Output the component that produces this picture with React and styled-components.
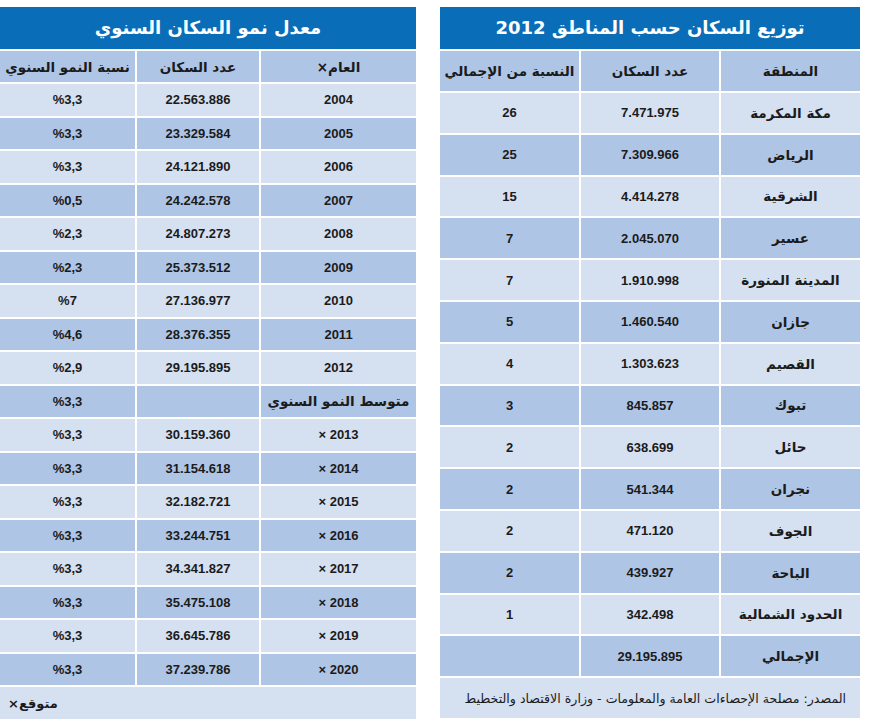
import React from "react";
import styled, { createGlobalStyle } from "styled-components";

const Global = createGlobalStyle`
  html, body { margin: 0; padding: 0; background: #ffffff; }
  body { font-family: "Liberation Sans", "DejaVu Sans", sans-serif; }
`;

const Page = styled.div`
  display: flex;
  flex-direction: row-reverse;
  justify-content: flex-end;
  gap: 24px;
  padding: 7px 10px 0 0;
  width: 870px;
  box-sizing: border-box;
`;

const Panel = styled.div`
  direction: rtl;
  width: ${(p) => p.$w}px;
  display: flex;
  flex-direction: column;
  gap: 2px;
`;

const Title = styled.div`
  height: 42px;
  background: #0a6db7;
  color: #ffffff;
  display: flex;
  align-items: center;
  justify-content: center;
  font-family: "DejaVu Sans", sans-serif;
  font-weight: 700;
  font-size: 18px;
  padding-bottom: 2px;
  box-sizing: border-box;
`;

const Row = styled.div`
  display: grid;
  grid-template-columns: ${(p) => p.$cols};
  column-gap: 2px;
  height: ${(p) => p.$h}px;
`;

const Cell = styled.div`
  background: ${(p) => (p.$dark ? "#aec5e6" : "#d5e0f1")};
  display: flex;
  align-items: center;
  justify-content: center;
  color: #1b1b1b;
  font-size: ${(p) => (p.$ar ? "13.5px" : "13px")};
  font-weight: 700;
  font-family: ${(p) =>
    p.$ar ? '"DejaVu Sans", sans-serif' : '"Liberation Sans", "DejaVu Sans", sans-serif'};
  white-space: nowrap;
  overflow: hidden;
`;

const Footer = styled.div`
  height: ${(p) => p.$h}px;
  background: #d5e0f1;
  display: flex;
  align-items: center;
  justify-content: ${(p) => (p.$end ? "flex-end" : "flex-start")};
  padding: 0 ${(p) => p.$pad}px;
  font-family: "DejaVu Sans", sans-serif;
  font-size: ${(p) => p.$fs}px;
  font-weight: ${(p) => p.$fw};
  color: #1b1b1b;
  white-space: nowrap;
  overflow: hidden;
`;

const growth = [
  ["2004", "22.563.886", "%3,3"],
  ["2005", "23.329.584", "%3,3"],
  ["2006", "24.121.890", "%3,3"],
  ["2007", "24.242.578", "%0,5"],
  ["2008", "24.807.273", "%2,3"],
  ["2009", "25.373.512", "%2,3"],
  ["2010", "27.136.977", "%7"],
  ["2011", "28.376.355", "%4,6"],
  ["2012", "29.195.895", "%2,9"],
  ["AVG", "", "%3,3"],
  ["2013 ×", "30.159.360", "%3,3"],
  ["2014 ×", "31.154.618", "%3,3"],
  ["2015 ×", "32.182.721", "%3,3"],
  ["2016 ×", "33.244.751", "%3,3"],
  ["2017 ×", "34.341.827", "%3,3"],
  ["2018 ×", "35.475.108", "%3,3"],
  ["2019 ×", "36.645.786", "%3,3"],
  ["2020 ×", "37.239.786", "%3,3"],
];

const regions = [
  ["مكة المكرمة", "7.471.975", "26"],
  ["الرياض", "7.309.966", "25"],
  ["الشرقية", "4.414.278", "15"],
  ["عسير", "2.045.070", "7"],
  ["المدينة المنورة", "1.910.998", "7"],
  ["جازان", "1.460.540", "5"],
  ["القصيم", "1.303.623", "4"],
  ["تبوك", "845.857", "3"],
  ["حائل", "638.699", "2"],
  ["نجران", "541.344", "2"],
  ["الجوف", "471.120", "2"],
  ["الباحة", "439.927", "2"],
  ["الحدود الشمالية", "342.498", "1"],
  ["الإجمالي", "29.195.895", ""],
];

const LEFT_COLS = "155px 122px 135px";
const RIGHT_COLS = "139px 138px 139px";

export default function App() {
  return (
    <>
      <Global />
      <Page>
        <Panel $w={420}>
          <Title>توزيع السكان حسب المناطق 2012</Title>
          <Row $cols={RIGHT_COLS} $h={40}>
            <Cell $dark $ar>المنطقة</Cell>
            <Cell $dark $ar>عدد السكان</Cell>
            <Cell $dark $ar>النسبة من الإجمالي</Cell>
          </Row>
          {regions.map((r, i) => (
            <Row key={r[0]} $cols={RIGHT_COLS} $h={39.8}>
              <Cell $dark={i % 2 === 1} $ar>{r[0]}</Cell>
              <Cell $dark={i % 2 === 1}>{r[1]}</Cell>
              <Cell $dark={i % 2 === 1}>{r[2]}</Cell>
            </Row>
          ))}
          <Footer $h={39.8} $pad={14} $fs={12.6} $fw={400}>
            المصدر: مصلحة الإحصاءات العامة والمعلومات - وزارة الاقتصاد والتخطيط
          </Footer>
        </Panel>
        <Panel $w={416}>
          <Title>معدل نمو السكان السنوي</Title>
          <Row $cols={LEFT_COLS} $h={31}>
            <Cell $dark $ar>العام×</Cell>
            <Cell $dark $ar>عدد السكان</Cell>
            <Cell $dark $ar>نسبة النمو السنوي</Cell>
          </Row>
          {growth.map((r, i) => (
            <Row key={r[0]} $cols={LEFT_COLS} $h={31.5}>
              {r[0] === "AVG" ? (
                <Cell $dark={i % 2 === 1} $ar>متوسط النمو السنوي</Cell>
              ) : (
                <Cell $dark={i % 2 === 1}>{r[0]}</Cell>
              )}
              <Cell $dark={i % 2 === 1}>{r[1]}</Cell>
              <Cell $dark={i % 2 === 1}>{r[2]}</Cell>
            </Row>
          ))}
          <Footer $h={32} $pad={8} $fs={13} $fw={700} $end>
            متوقع×
          </Footer>
        </Panel>
      </Page>
    </>
  );
}
